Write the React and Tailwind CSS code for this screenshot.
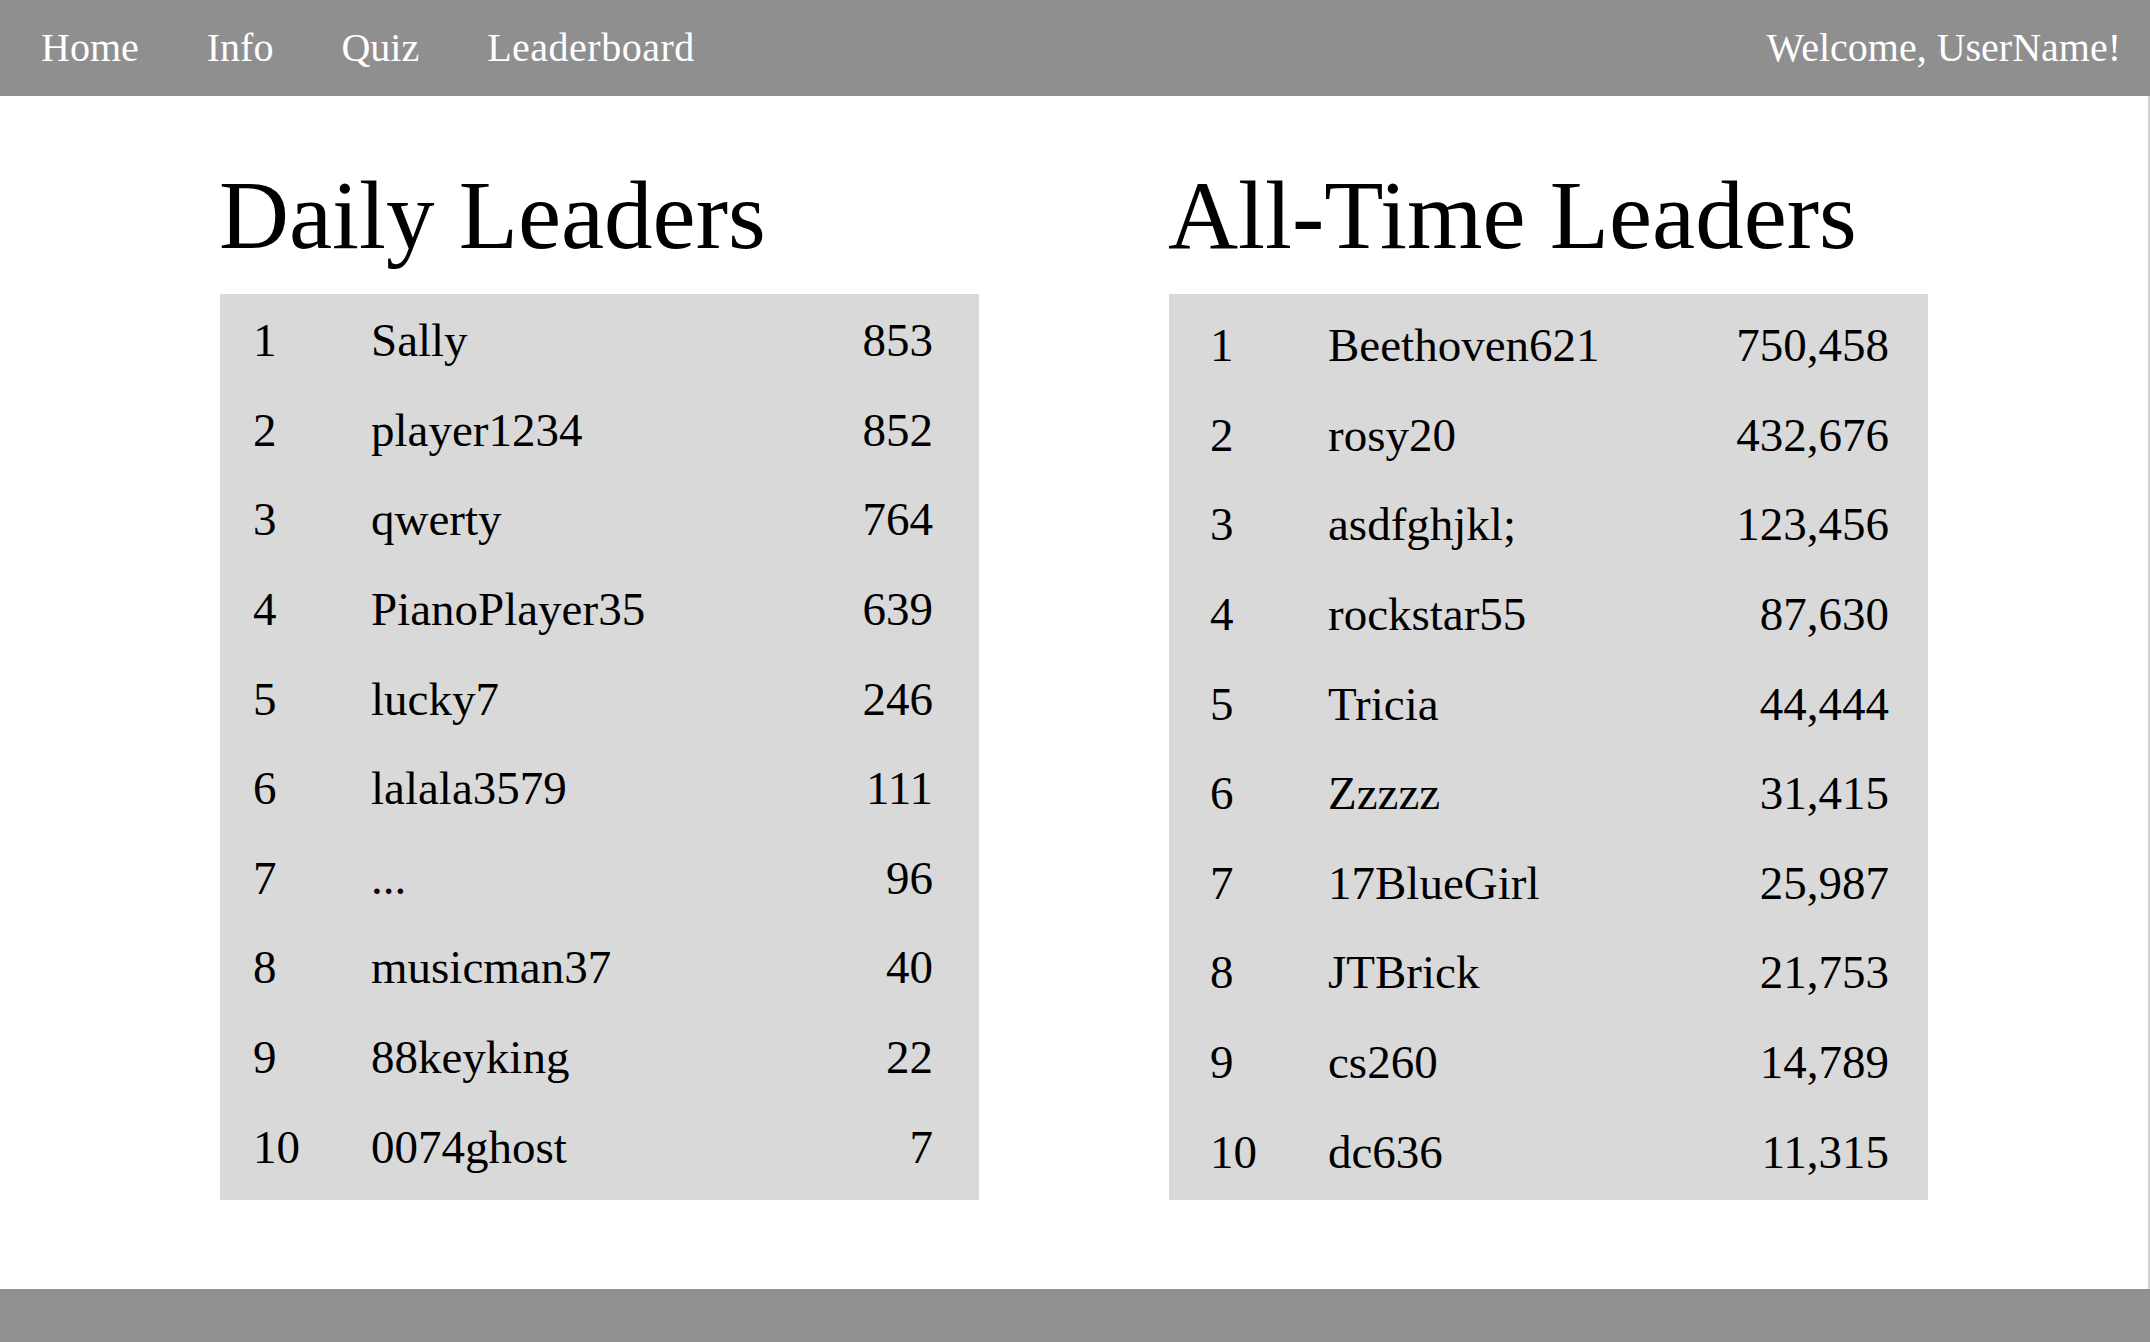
const daily = [
  ['1', 'Sally', '853'],
  ['2', 'player1234', '852'],
  ['3', 'qwerty', '764'],
  ['4', 'PianoPlayer35', '639'],
  ['5', 'lucky7', '246'],
  ['6', 'lalala3579', '111'],
  ['7', '...', '96'],
  ['8', 'musicman37', '40'],
  ['9', '88keyking', '22'],
  ['10', '0074ghost', '7']
]

const allTime = [
  ['1', 'Beethoven621', '750,458'],
  ['2', 'rosy20', '432,676'],
  ['3', 'asdfghjkl;', '123,456'],
  ['4', 'rockstar55', '87,630'],
  ['5', 'Tricia', '44,444'],
  ['6', 'Zzzzz', '31,415'],
  ['7', '17BlueGirl', '25,987'],
  ['8', 'JTBrick', '21,753'],
  ['9', 'cs260', '14,789'],
  ['10', 'dc636', '11,315']
]

function Board({ title, rows, right }) {
  return (
    <section className="w-[759px] flex flex-col">
      <h2 className="text-[97px] leading-none text-black mb-[30px] -ml-[1px]">{title}</h2>
      <div className={`bg-[#d9d9d9] h-[906px] flex flex-col ${right ? 'pt-[7px]' : 'pt-[2px]'}`}>
        {rows.map(([rank, name, score]) => (
          <div
            key={rank}
            className={`h-[89.6px] flex items-center text-[47px] leading-none text-black ${right ? 'pl-[41px] pr-[39px]' : 'pl-[33px] pr-[46px]'}`}
          >
            <span className="w-[118px] shrink-0">{rank}</span>
            <span className="flex-1">{name}</span>
            <span className="text-right">{score}</span>
          </div>
        ))}
      </div>
    </section>
  )
}

export default function App() {
  return (
    <div className="w-full h-[1342px] overflow-hidden flex flex-col bg-white font-['Liberation_Serif',serif]">
      <nav className="h-[96px] shrink-0 bg-[#8f8f8f] flex items-center justify-between pl-[41px] pr-[29px] text-white text-[40px]">
        <div className="flex items-center gap-[68px]">
          <a href="#">Home</a>
          <a href="#">Info</a>
          <a href="#">Quiz</a>
          <a href="#" className="tracking-[0.5px]">Leaderboard</a>
        </div>
        <span>Welcome, UserName!</span>
      </nav>

      <main className="h-[1193px] shrink-0 flex justify-center gap-[190px] pt-[71px] border-r-2 border-[#d2d2d2]">
        <Board title="Daily Leaders" rows={daily} />
        <Board title="All-Time Leaders" rows={allTime} right />
      </main>

      <footer className="flex-1 bg-[#919191]" />
    </div>
  )
}
